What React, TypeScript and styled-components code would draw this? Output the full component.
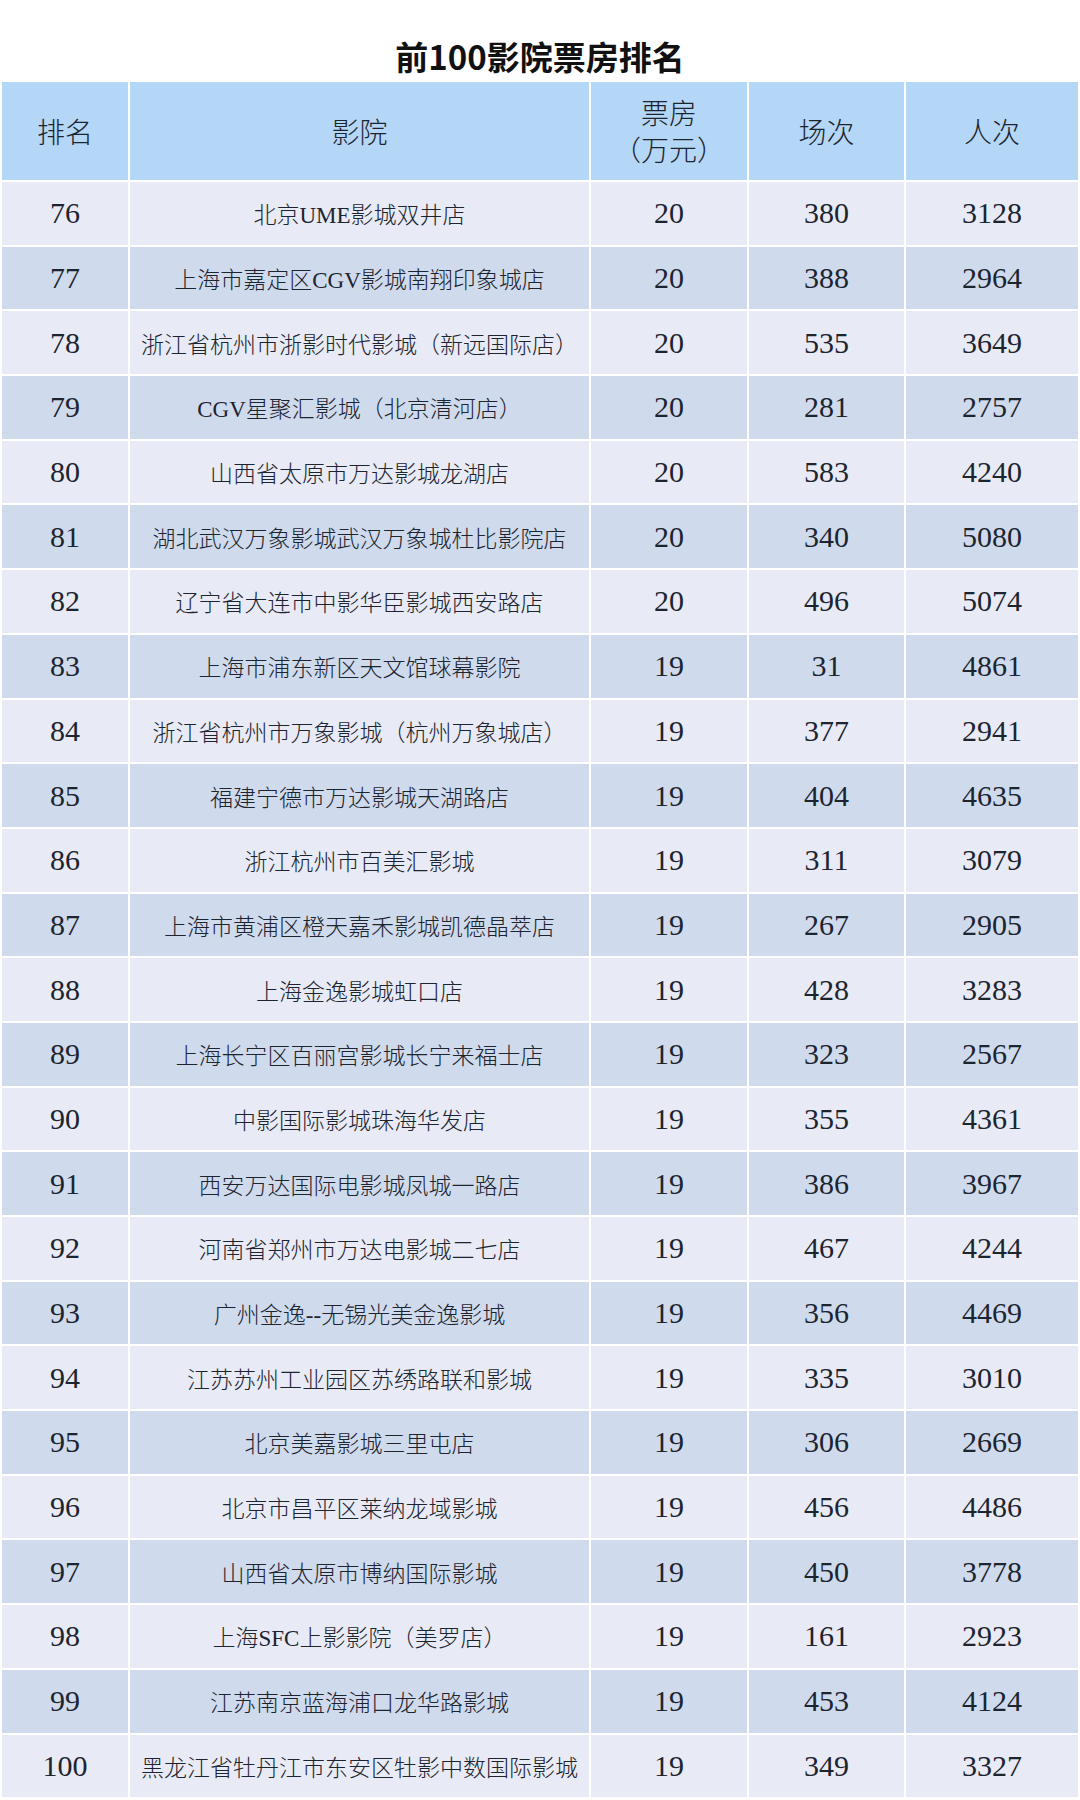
import styled, { createGlobalStyle } from "styled-components";

const GlobalStyle = createGlobalStyle`
  html, body {
    margin: 0;
    padding: 0;
    background: #ffffff;
  }
`;

const Page = styled.div`
  width: 1080px;
  background: #ffffff;
`;

const Title = styled.h1`
  margin: 0 0 4px;
  padding-top: 36px;
  height: 40px;
  line-height: 40px;
  text-align: center;
  font-family: "Noto Sans CJK SC", "Noto Sans", sans-serif;
  font-size: 33px;
  font-weight: 700;
  color: #111111;
`;

const Table = styled.table`
  width: 1080px;
  table-layout: fixed;
  border-collapse: separate;
  border-spacing: 2px;
  font-family: "Liberation Serif", "Noto Sans CJK SC", serif;
  color: #1c2430;
`;

const HeadCell = styled.th<{ $w: number }>`
  width: ${(p) => p.$w}px;
  height: 98px;
  padding: 0;
  background: #b5d7f7;
  font-family: "Noto Sans CJK SC", sans-serif;
  font-size: 28px;
  font-weight: 300;
  line-height: 37px;
  text-align: center;
  vertical-align: middle;
`;

const Row = styled.tr<{ $alt: boolean }>`
  height: 62.7px;
  background: ${(p) => (p.$alt ? "#cfdbed" : "#e8ebf5")};
`;

const Cell = styled.td<{ $name?: boolean }>`
  padding: 0;
  text-align: center;
  vertical-align: middle;
  white-space: nowrap;
  overflow: hidden;
  font-size: ${(p) => (p.$name ? "23px" : "30px")};
  font-weight: ${(p) => (p.$name ? 300 : 400)};
`;

const rows: [number, string, number, number, number][] = [
  [76, "北京UME影城双井店", 20, 380, 3128],
  [77, "上海市嘉定区CGV影城南翔印象城店", 20, 388, 2964],
  [78, "浙江省杭州市浙影时代影城（新远国际店）", 20, 535, 3649],
  [79, "CGV星聚汇影城（北京清河店）", 20, 281, 2757],
  [80, "山西省太原市万达影城龙湖店", 20, 583, 4240],
  [81, "湖北武汉万象影城武汉万象城杜比影院店", 20, 340, 5080],
  [82, "辽宁省大连市中影华臣影城西安路店", 20, 496, 5074],
  [83, "上海市浦东新区天文馆球幕影院", 19, 31, 4861],
  [84, "浙江省杭州市万象影城（杭州万象城店）", 19, 377, 2941],
  [85, "福建宁德市万达影城天湖路店", 19, 404, 4635],
  [86, "浙江杭州市百美汇影城", 19, 311, 3079],
  [87, "上海市黄浦区橙天嘉禾影城凯德晶萃店", 19, 267, 2905],
  [88, "上海金逸影城虹口店", 19, 428, 3283],
  [89, "上海长宁区百丽宫影城长宁来福士店", 19, 323, 2567],
  [90, "中影国际影城珠海华发店", 19, 355, 4361],
  [91, "西安万达国际电影城凤城一路店", 19, 386, 3967],
  [92, "河南省郑州市万达电影城二七店", 19, 467, 4244],
  [93, "广州金逸--无锡光美金逸影城", 19, 356, 4469],
  [94, "江苏苏州工业园区苏绣路联和影城", 19, 335, 3010],
  [95, "北京美嘉影城三里屯店", 19, 306, 2669],
  [96, "北京市昌平区莱纳龙域影城", 19, 456, 4486],
  [97, "山西省太原市博纳国际影城", 19, 450, 3778],
  [98, "上海SFC上影影院（美罗店）", 19, 161, 2923],
  [99, "江苏南京蓝海浦口龙华路影城", 19, 453, 4124],
  [100, "黑龙江省牡丹江市东安区牡影中数国际影城", 19, 349, 3327],
];

export default function App() {
  return (
    <Page>
      <GlobalStyle />
      <Title>前100影院票房排名</Title>
      <Table>
        <thead>
          <tr>
            <HeadCell $w={126}>排名</HeadCell>
            <HeadCell $w={459}>影院</HeadCell>
            <HeadCell $w={156}>
              票房
              <br />
              （万元）
            </HeadCell>
            <HeadCell $w={155}>场次</HeadCell>
            <HeadCell $w={172}>人次</HeadCell>
          </tr>
        </thead>
        <tbody>
          {rows.map(([rank, name, box, shows, people], i) => (
            <Row key={rank} $alt={i % 2 === 1}>
              <Cell>{rank}</Cell>
              <Cell $name>{name}</Cell>
              <Cell>{box}</Cell>
              <Cell>{shows}</Cell>
              <Cell>{people}</Cell>
            </Row>
          ))}
        </tbody>
      </Table>
    </Page>
  );
}
